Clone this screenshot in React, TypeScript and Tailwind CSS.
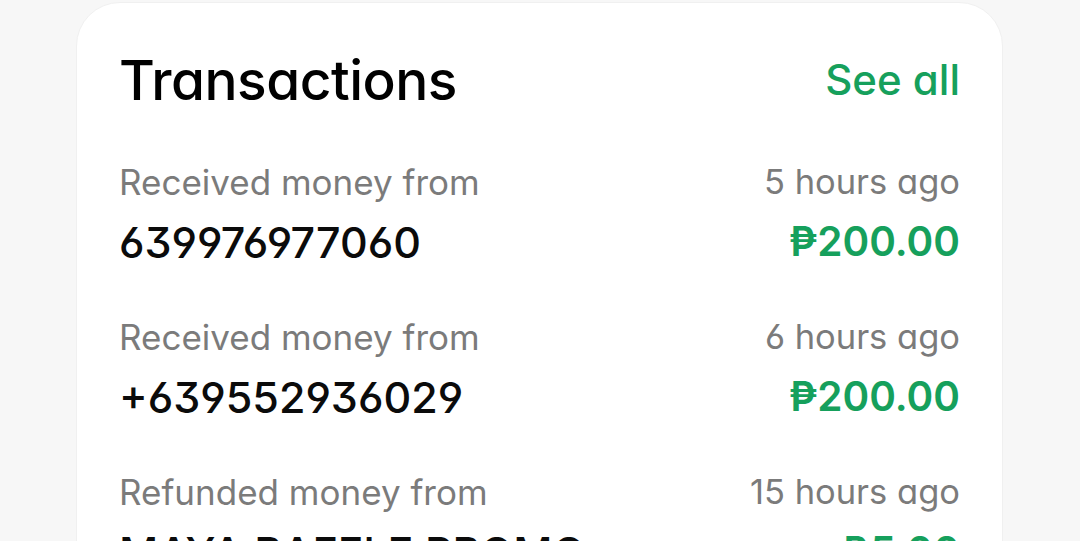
import React from "react"

type Txn = {
    label: string
    party: string
    time: string
    amount: string
}

const txns: Txn[] = [
    { label: "Received money from", party: "639976977060", time: "5 hours ago", amount: "₱200.00" },
    { label: "Received money from", party: "+639552936029", time: "6 hours ago", amount: "₱200.00" },
    { label: "Refunded money from", party: "MAYA RAFFLE PROMO", time: "15 hours ago", amount: "₱5.00" },
]

function TxnRow({ t }: { t: Txn }) {
    return (
        <div className="flex justify-between items-start">
            <div className="flex flex-col">
                <span className="text-[35px] leading-[44px] text-[#7b7b7b]">{t.label}</span>
                <span className="mt-[15px] text-[43px] leading-[46px] font-medium text-[#0b0b0b]">{t.party}</span>
            </div>
            <div className="flex flex-col items-end">
                <span className="text-[34.5px] leading-[44px] text-[#7b7b7b]">{t.time}</span>
                <span className="mt-[15px] text-[40.5px] leading-[46px] font-semibold text-[#16a05c]">{t.amount}</span>
            </div>
        </div>
    )
}

export default function App() {
    return (
        <div
            className="w-[1080px] h-[541px] overflow-hidden bg-[#f7f7f7] pl-[76px] pr-[77px] pt-[2px] font-['Inter',sans-serif] [font-feature-settings:'cv11','ss01']"
        >
            <div className="bg-white rounded-t-[44px] h-[700px] pl-[42px] pr-[42px] pt-[44px] border border-[#f0f0f0]">
                <div className="flex justify-between items-center">
                    <h1 className="text-[55px] leading-[66px] font-medium text-black tracking-[-0.5px]">Transactions</h1>
                    <a className="text-[42px] leading-[48px] font-medium text-[#16a05c]">See all</a>
                </div>
                <div className="mt-[47px] flex flex-col gap-[50px]">
                    {txns.map((t, i) => (
                        <TxnRow key={i} t={t} />
                    ))}
                </div>
            </div>
        </div>
    )
}
